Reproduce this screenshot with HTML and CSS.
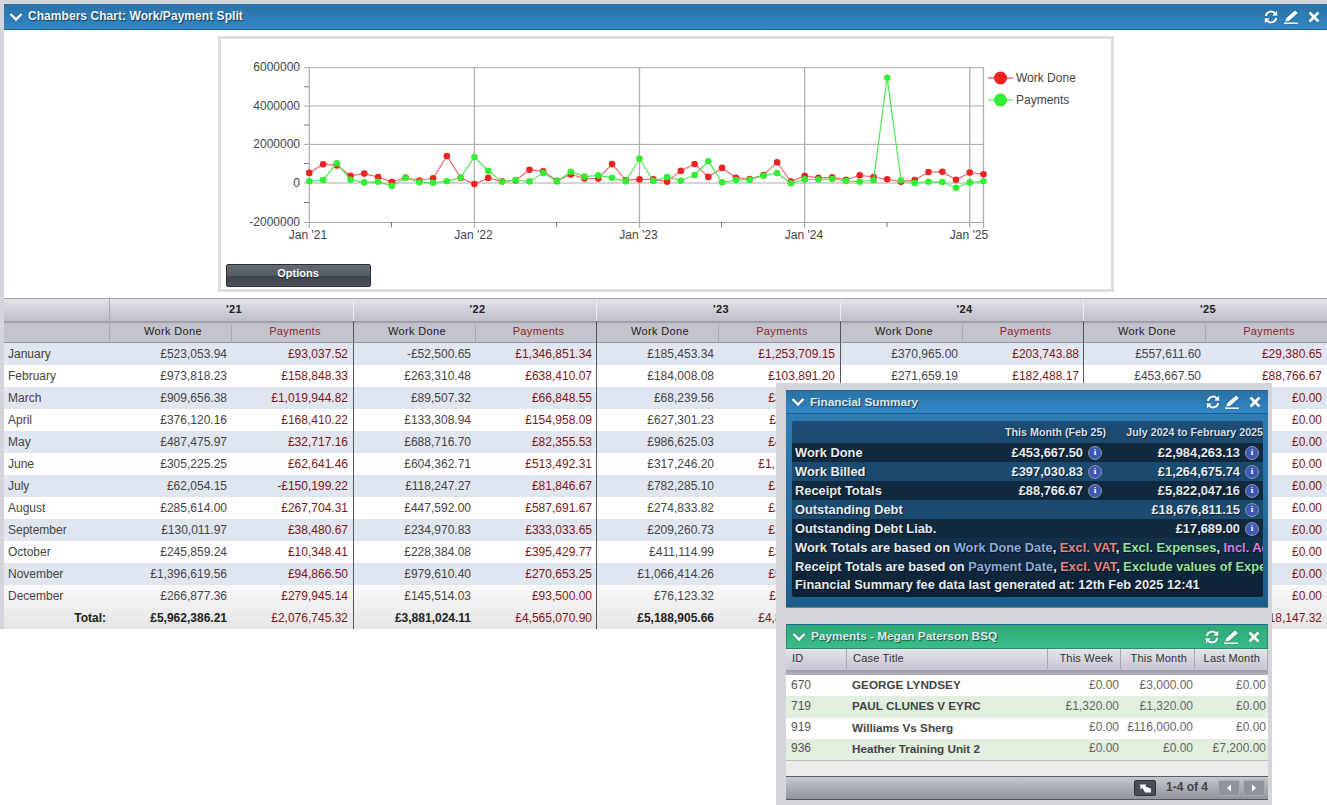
FILE: index.html
```html
<!DOCTYPE html>
<html lang="en">
<head>
<meta charset="utf-8">
<title>Chambers Chart</title>
<link rel="stylesheet" href="styles.css">
</head>
<body>
<svg class="sprite" aria-hidden="true">
  <symbol id="i-chevron" viewBox="0 0 14 14"><path d="M1.5 4 7 9.5 12.5 4" fill="none" stroke="currentColor" stroke-width="2.4"/></symbol>
  <symbol id="i-refresh" viewBox="0 0 14 14"><path d="M1.8 6A5.3 5.3 0 0 1 10.8 3.2M12.2 8A5.3 5.3 0 0 1 3.2 10.8" fill="none" stroke="currentColor" stroke-width="2"/><path d="M8.2 5.6 13.4 5.8 13 0.8ZM5.8 8.4 0.6 8.2 1 13.2Z" fill="currentColor"/></symbol>
  <symbol id="i-pencil" viewBox="0 0 14 14"><path d="M11 0.6 13.8 3 5.2 10.8 1.2 11.4 2.4 8Z" fill="currentColor"/><path d="M0 13.2h14" stroke="currentColor" stroke-width="1.5"/></symbol>
  <symbol id="i-close" viewBox="0 0 14 14"><path d="M2.5 2.5 11.5 11.5M11.5 2.5 2.5 11.5" fill="none" stroke="currentColor" stroke-width="2.8"/></symbol>
</svg>

<main class="widget">
  <section class="panel">
    <header class="bar bar-blue">
      <svg class="ic chev"><use href="#i-chevron"/></svg>
      <h1 class="bar-title">Chambers Chart: Work/Payment Split</h1>
      <svg class="ic"><use href="#i-refresh"/></svg>
      <svg class="ic ic-pencil"><use href="#i-pencil"/></svg>
      <svg class="ic ic-close"><use href="#i-close"/></svg>
    </header>

    <div class="chart-area">
      <div class="chart-box">
        <svg class="chart" viewBox="221 39 890 222" width="890" height="222">
          <defs>
            <marker id="dot-red" viewBox="0 0 8 8" refX="4" refY="4" markerUnits="userSpaceOnUse" markerWidth="8" markerHeight="8"><circle cx="4" cy="4" r="3.3" fill="#ee2222"/></marker>
            <marker id="dot-green" viewBox="0 0 8 8" refX="4" refY="4" markerUnits="userSpaceOnUse" markerWidth="8" markerHeight="8"><circle cx="4" cy="4" r="3.3" fill="#33ee33"/></marker>
          </defs>
          <g class="grid-h">
            <path d="M304 67.7H983.5M304 106H983.5M304 144.4H983.5M304 183H983.5M304 222.5H983.5"/>
          </g>
          <g class="tick">
            <path d="M304 86.8h5M304 125h5M304 163.5h5M304 202.5h5M391.5 222v5M556.5 222v5M721.5 222v5M887 222v5"/>
          </g>
          <g class="grid-v">
            <path d="M309.3 67V228M474.4 67V228M639.5 67V228M804.7 67V228M969.8 67V228M983.5 67V228"/>
          </g>
          <g class="axis-y">
            <text x="300" y="70.5">6000000</text>
            <text x="300" y="109.5">4000000</text>
            <text x="300" y="147.5">2000000</text>
            <text x="300" y="186.5">0</text>
            <text x="300" y="225.5">-2000000</text>
          </g>
          <g class="axis-x">
            <text x="308" y="239">Jan '21</text>
            <text x="473.5" y="239">Jan '22</text>
            <text x="638.5" y="239">Jan '23</text>
            <text x="804" y="239">Jan '24</text>
            <text x="969" y="239">Jan '25</text>
          </g>
          <polyline class="line-red" points="309.3,172.9 323.1,164.2 336.8,165.4 350.6,175.7 364.3,173.6 378.1,177.1 391.9,181.8 405.6,177.5 419.4,180.5 433.1,178.3 446.9,156 460.7,177.9 474.4,184 488.2,177.9 502,181.3 515.7,180.4 529.5,169.7 543.2,171.3 557,180.7 570.8,174.4 584.5,178.5 598.3,178.6 612,164.1 625.8,180.2 639.5,179.4 653.3,179.4 667.1,181.7 680.8,170.9 694.6,164 708.3,176.9 722.1,167.9 735.9,177.7 749.6,179 763.4,175 777.1,162.4 790.9,181.5 804.7,175.9 818.4,177.8 832.2,177.3 846,179.7 859.7,175.3 873.5,177 887.2,179.3 901,181.7 914.7,180 928.5,172 942.3,171.7 956,179.7 969.8,172.5 983.5,174.3"/>
          <polyline class="line-green" points="309.3,181.2 323.1,180 336.8,163.3 350.6,179.8 364.3,182.4 378.1,181.8 391.9,185.9 405.6,177.8 419.4,182.3 433.1,182.8 446.9,181.2 460.7,177.6 474.4,157 488.2,170.7 502,181.7 515.7,180 529.5,181.4 543.2,173.1 557,181.4 570.8,171.7 584.5,176.6 598.3,175.4 612,177.8 625.8,181.2 639.5,158.8 653.3,181 667.1,177 680.8,180.7 694.6,175 708.3,161.3 722.1,182.3 735.9,180 749.6,179.7 763.4,175.7 777.1,173 790.9,183.3 804.7,179.4 818.4,179.5 832.2,179 846,181 859.7,181.7 873.5,180.3 887.2,77.7 901,180.3 914.7,183 928.5,181.7 942.3,182 956,187.7 969.8,182.4 983.5,181.3"/>
          <path class="legend-red" d="M988 78h25"/>
          <circle class="legend-dot-red" cx="1000.5" cy="78" r="6.5"/>
          <text class="legend-text" x="1016" y="82">Work Done</text>
          <path class="legend-green" d="M988 100h25"/>
          <circle class="legend-dot-green" cx="1000.5" cy="100" r="6.5"/>
          <text class="legend-text" x="1016" y="104">Payments</text>
        </svg>
        <button class="options" type="button">Options</button>
      </div>
    </div>

    <table class="split">
      <colgroup>
        <col class="c-month"><col class="c-122"><col class="c-122"><col class="c-122"><col class="c-121"><col class="c-122"><col class="c-122"><col class="c-122"><col class="c-121"><col class="c-122"><col class="c-122">
      </colgroup>
      <thead>
        <tr class="head-years">
          <th></th><th colspan="2">'21</th><th colspan="2">'22</th><th colspan="2">'23</th><th colspan="2">'24</th><th colspan="2">'25</th>
        </tr>
        <tr class="head-cols">
          <th></th>
          <th>Work Done</th><th class="pay">Payments</th>
          <th>Work Done</th><th class="pay">Payments</th>
          <th>Work Done</th><th class="pay">Payments</th>
          <th>Work Done</th><th class="pay">Payments</th>
          <th>Work Done</th><th class="pay">Payments</th>
        </tr>
      </thead>
      <tbody>
        <tr><td class="m">January</td><td>£523,053.94</td><td class="pay">£93,037.52</td><td>-£52,500.65</td><td class="pay">£1,346,851.34</td><td>£185,453.34</td><td class="pay">£1,253,709.15</td><td>£370,965.00</td><td class="pay">£203,743.88</td><td>£557,611.60</td><td class="pay">£29,380.65</td></tr>
        <tr><td class="m">February</td><td>£973,818.23</td><td class="pay">£158,848.33</td><td>£263,310.48</td><td class="pay">£638,410.07</td><td>£184,008.08</td><td class="pay">£103,891.20</td><td>£271,659.19</td><td class="pay">£182,488.17</td><td>£453,667.50</td><td class="pay">£88,766.67</td></tr>
        <tr><td class="m">March</td><td>£909,656.38</td><td class="pay">£1,019,944.82</td><td>£89,507.32</td><td class="pay">£66,848.55</td><td>£68,239.56</td><td class="pay">£310,482.60</td><td></td><td class="pay"></td><td></td><td class="pay">£0.00</td></tr>
        <tr><td class="m">April</td><td>£376,120.16</td><td class="pay">£168,410.22</td><td>£133,308.94</td><td class="pay">£154,958.09</td><td>£627,301.23</td><td class="pay">£118,240.71</td><td></td><td class="pay"></td><td></td><td class="pay">£0.00</td></tr>
        <tr><td class="m">May</td><td>£487,475.97</td><td class="pay">£32,717.16</td><td>£688,716.70</td><td class="pay">£82,355.53</td><td>£986,625.03</td><td class="pay">£412,775.09</td><td></td><td class="pay"></td><td></td><td class="pay">£0.00</td></tr>
        <tr><td class="m">June</td><td>£305,225.25</td><td class="pay">£62,641.46</td><td>£604,362.71</td><td class="pay">£513,492.31</td><td>£317,246.20</td><td class="pay">£1,121,604.52</td><td></td><td class="pay"></td><td></td><td class="pay">£0.00</td></tr>
        <tr><td class="m">July</td><td>£62,054.15</td><td class="pay">-£150,199.22</td><td>£118,247.27</td><td class="pay">£81,846.67</td><td>£782,285.10</td><td class="pay">£152,318.44</td><td></td><td class="pay"></td><td></td><td class="pay">£0.00</td></tr>
        <tr><td class="m">August</td><td>£285,614.00</td><td class="pay">£267,704.31</td><td>£447,592.00</td><td class="pay">£587,691.67</td><td>£274,833.82</td><td class="pay">£155,907.36</td><td></td><td class="pay"></td><td></td><td class="pay">£0.00</td></tr>
        <tr><td class="m">September</td><td>£130,011.97</td><td class="pay">£38,480.67</td><td>£234,970.83</td><td class="pay">£333,033.65</td><td>£209,260.73</td><td class="pay">£170,212.83</td><td></td><td class="pay"></td><td></td><td class="pay">£0.00</td></tr>
        <tr><td class="m">October</td><td>£245,859.24</td><td class="pay">£10,348.41</td><td>£228,384.08</td><td class="pay">£395,429.77</td><td>£411,114.99</td><td class="pay">£381,605.19</td><td></td><td class="pay"></td><td></td><td class="pay">£0.00</td></tr>
        <tr><td class="m">November</td><td>£1,396,619.56</td><td class="pay">£94,866.50</td><td>£979,610.40</td><td class="pay">£270,653.25</td><td>£1,066,414.26</td><td class="pay">£518,340.77</td><td></td><td class="pay"></td><td></td><td class="pay">£0.00</td></tr>
        <tr class="row-dec"><td class="m">December</td><td>£266,877.36</td><td class="pay">£279,945.14</td><td>£145,514.03</td><td class="pay">£93,500.00</td><td>£76,123.32</td><td class="pay">£112,850.00</td><td></td><td class="pay"></td><td></td><td class="pay">£0.00</td></tr>
        <tr class="row-total"><td class="t">Total:</td><td>£5,962,386.21</td><td class="pay">£2,076,745.32</td><td>£3,881,024.11</td><td class="pay">£4,565,070.90</td><td>£5,188,905.66</td><td class="pay">£4,801,447.86</td><td></td><td class="pay"></td><td></td><td class="pay">£118,147.32</td></tr>
      </tbody>
    </table>
  </section>
</main>

<aside class="overlay">
  <section class="win">
    <header class="bar bar-blue bar-win">
      <svg class="ic chev"><use href="#i-chevron"/></svg>
      <h2 class="bar-title">Financial Summary</h2>
      <svg class="ic"><use href="#i-refresh"/></svg>
      <svg class="ic ic-pencil"><use href="#i-pencil"/></svg>
      <svg class="ic ic-close"><use href="#i-close"/></svg>
    </header>
    <div class="fin-body">
      <div class="fin">
        <div class="fin-head">
          <span class="fh1">This Month (Feb 25)</span>
          <span class="fh2">July 2024 to February 2025</span>
        </div>
        <div class="fin-row dark"><span class="lab">Work Done</span><span class="val">£453,667.50</span><span class="info">i</span><span class="val">£2,984,263.13</span><span class="info">i</span></div>
        <div class="fin-row lite"><span class="lab">Work Billed</span><span class="val">£397,030.83</span><span class="info">i</span><span class="val">£1,264,675.74</span><span class="info">i</span></div>
        <div class="fin-row dark"><span class="lab">Receipt Totals</span><span class="val">£88,766.67</span><span class="info">i</span><span class="val">£5,822,047.16</span><span class="info">i</span></div>
        <div class="fin-row lite"><span class="lab">Outstanding Debt</span><span class="val"></span><span></span><span class="val">£18,676,811.15</span><span class="info">i</span></div>
        <div class="fin-row dark"><span class="lab">Outstanding Debt Liab.</span><span class="val"></span><span></span><span class="val">£17,689.00</span><span class="info">i</span></div>
        <p class="fin-line">Work Totals are based on <span class="c-blue">Work Done Date</span>, <span class="c-red">Excl. VAT</span>, <span class="c-green">Excl. Expenses</span>, <span class="c-pink">Incl. Adjustments</span></p>
        <p class="fin-line">Receipt Totals are based on <span class="c-blue">Payment Date</span>, <span class="c-red">Excl. VAT</span>, <span class="c-green">Exclude values of Expenses</span></p>
        <p class="fin-line">Financial Summary fee data last generated at: 12th Feb 2025 12:41</p>
      </div>
    </div>
  </section>

  <section class="win win-pay">
    <header class="bar bar-green bar-win">
      <svg class="ic chev"><use href="#i-chevron"/></svg>
      <h2 class="bar-title">Payments - Megan Paterson BSQ</h2>
      <svg class="ic"><use href="#i-refresh"/></svg>
      <svg class="ic ic-pencil"><use href="#i-pencil"/></svg>
      <svg class="ic ic-close"><use href="#i-close"/></svg>
    </header>
    <table class="pay-table">
      <colgroup><col class="p-id"><col class="p-case"><col class="p-n"><col class="p-n2"><col class="p-n"></colgroup>
      <thead>
        <tr><th class="l">ID</th><th class="l">Case Title</th><th>This Week</th><th>This Month</th><th>Last Month</th></tr>
      </thead>
      <tbody>
        <tr><td>670</td><td class="case">GEORGE LYNDSEY</td><td class="n">£0.00</td><td class="n">£3,000.00</td><td class="n">£0.00</td></tr>
        <tr class="alt"><td>719</td><td class="case">PAUL CLUNES V EYRC</td><td class="n">£1,320.00</td><td class="n">£1,320.00</td><td class="n">£0.00</td></tr>
        <tr><td>919</td><td class="case">Williams Vs Sherg</td><td class="n">£0.00</td><td class="n">£116,000.00</td><td class="n">£0.00</td></tr>
        <tr class="alt"><td>936</td><td class="case">Heather Training Unit 2</td><td class="n">£0.00</td><td class="n">£0.00</td><td class="n">£7,200.00</td></tr>
      </tbody>
    </table>
    <div class="pay-strip"></div>
    <footer class="pay-foot">
      <span class="tool-btn"><svg class="tool-ic" viewBox="0 0 14 10"><path d="M1 0.5H8L6.6 2.6 13 5.2V9.5H6.5L3.6 4.2 1.5 6Z" fill="#fff"/></svg></span>
      <span class="pager">1-4 of 4</span>
      <span class="nav-btn"><svg class="nav-ic" viewBox="0 0 6 8"><path d="M5 0.5V7.5L1 4Z" fill="#fff"/></svg></span>
      <span class="nav-btn"><svg class="nav-ic" viewBox="0 0 6 8"><path d="M1 0.5V7.5L5 4Z" fill="#fff"/></svg></span>
    </footer>
  </section>
</aside>
</body>
</html>
```

FILE: styles.css
```css
* { box-sizing: border-box; }
html, body { margin: 0; padding: 0; height: 805px; overflow: hidden; background: #fff; }
body { font-family: "Liberation Sans", Arial, sans-serif; font-size: 12px; color: #444; position: relative; }
.sprite { display: none; }

.widget { background: #d3d5da; padding: 4px 0 0 4px; height: 629px; overflow: hidden; }
.panel { background: #fff; width: 1323px; }

.bar { display: flex; align-items: center; height: 26px; padding: 0 5px 0 5px; color: #fff; }
.bar-blue { background: linear-gradient(#2a72a6, #3187c6); border-bottom: 1px solid #1c5c88; }
.bar-green { background: linear-gradient(#30a877, #39bd86); border: 1px solid #25906a; border-bottom-color: #25906a; }
.bar-title { flex: 1; margin: 0 0 1px 5px; font-size: 12px; letter-spacing: .05px; font-weight: bold; color: #eef3f7; text-shadow: 1px 1px 1px rgba(0, 0, 0, .55); white-space: nowrap; }
.ic { width: 14px; height: 14px; color: #fff; flex: none; filter: drop-shadow(0 0 1px rgba(0, 0, 0, .25)); }
.ic-pencil { margin-left: 6px; }
.ic-close { margin-left: 9px; margin-right: 1px; }
.bar-win .ic-pencil { margin-left: 5px; }
.bar-win .bar-title { font-size: 11.8px; letter-spacing: 0; margin-left: 5px; color: #dfe8f0; }

.chart-area { padding: 6px 0 6px; }
.chart-box { width: 896px; height: 256px; margin: 0 auto; border: 3px solid #dedede; background: #fff; }
.chart { display: block; font-size: 12px; fill: #444; }
.grid-h path { stroke: #a9a9a9; stroke-width: 1; fill: none; }
.tick path { stroke: #777; stroke-width: 1; fill: none; }
.grid-v path { stroke: #b0b0b0; stroke-width: 1.3; fill: none; }
.axis-y text { text-anchor: end; }
.axis-x text { text-anchor: middle; }
.line-red, .line-green { fill: none; stroke-width: 1.2; }
.line-red { stroke: #f06a6a; marker-start: url(#dot-red); marker-mid: url(#dot-red); marker-end: url(#dot-red); }
.line-green { stroke: #4fe84f; marker-start: url(#dot-green); marker-mid: url(#dot-green); marker-end: url(#dot-green); }
.legend-red { stroke: #ee2222; stroke-width: 1; }
.legend-green { stroke: #33ee33; stroke-width: 1; }
.legend-dot-red { fill: #ee2222; }
.legend-dot-green { fill: #33ee33; }
.legend-text { fill: #444; }

.options { display: block; width: 145px; height: 23px; margin: 3px 0 0 5px; padding: 0 0 5px; border: 1px solid #2a2e33; border-radius: 2px; background: linear-gradient(#656c73 0, #555c63 50%, #3e454c 52%, #4b5158 100%); color: #fff; font: bold 11px "Liberation Sans", Arial, sans-serif; text-shadow: 0 1px 1px rgba(0, 0, 0, .5); }

.split { border-collapse: separate; border-spacing: 0; table-layout: fixed; width: 1324px; }
.c-month { width: 106px; }
.c-122 { width: 122px; }
.c-121 { width: 121px; }
.split th { font-size: 11px; font-weight: normal; color: #222; letter-spacing: .35px; padding: 0 0 0 5px; text-align: center; }
.head-years th { height: 23px; padding-bottom: 3px; background: linear-gradient(#e2e2e8, #bfbfca); border-top: 1px solid #a5a5b6; border-right: 1px solid #ececf0; font-weight: bold; }
.head-cols th { height: 22px; padding-bottom: 2px; background: linear-gradient(#8f8f9f 0, #c2c2cd 3px, #c6c6d1 100%); border-bottom: 1px solid #9494a6; border-right: 1px solid #a9a9b9; }
.head-years th:first-child { border-right: 1px solid #a9a9b9; }
.split .head-cols th.pay { color: #8a2a2a; border-right: 1px solid #55555f; }
.split td { height: 22px; padding: 0 5px 0 0; text-align: right; white-space: nowrap; overflow: hidden; color: #444; }
.split tbody tr:nth-child(odd) { background: #e0e6f0; }
.split td.m { text-align: left; padding: 0 0 0 4px; }
.split td.t { font-weight: bold; padding-right: 4px; }
.split td.pay { color: #7f1515; border-right: 1px solid #55555f; }
.split td:nth-child(5), .split td:nth-child(9) { padding-right: 4px; }
.split tbody tr.row-dec { background: linear-gradient(#f8f8f8, #efefef); }
.split tbody tr.row-total { background: linear-gradient(#efefef, #e5e5e5); }
.row-total td { font-weight: bold; color: #222; }
.split .row-total td.pay { font-weight: normal; }

.overlay { position: absolute; left: 776px; top: 383px; width: 496px; height: 422px; background: #d3d5da; padding: 7px 4px 0 10px; }
.win { width: 482px; }
.bar-win { height: 24px; padding-right: 5px; border-top: 1px solid #1f6595; }
.fin-body { height: 194px; padding: 7px 5px 0 6px; background: linear-gradient(#2e7cb5, #1d5d8a); border-bottom: 1px solid #6f8393; }
.fin { height: 176px; background: linear-gradient(#1d4e77, #0c2133); border-radius: 2px; overflow: hidden; color: #e6ecf2; text-shadow: 1px 1px 1px rgba(0, 0, 0, .6); font-weight: bold; font-size: 12.85px; }
.fin-head { height: 22px; display: grid; grid-template-columns: 314px 157px; align-items: center; font-size: 10.7px; color: #d6dfe8; text-align: right; }
.fin-row { display: grid; grid-template-columns: 151px 137px 23px 134px 23px; height: 19px; padding-left: 3px; align-items: center; }
.fin-row.dark { background: #11293f; }
.fin-row.lite { background: #1b4a70; }
.val { text-align: right; }
.info { width: 14px; height: 14px; margin-left: 5px; border-radius: 50%; border: 1.5px solid #8d97ad; background: #3e58b4; color: #fff; font: bold 9px/11px "Liberation Serif", serif; text-align: center; text-shadow: none; }
.fin-line { margin: 0; height: 18.7px; line-height: 18.7px; padding-left: 3px; white-space: nowrap; overflow: hidden; }
.fin-row + .fin-line { margin-top: 1px; }
.c-blue { color: #8aa9d8; }
.c-red { color: #e8837c; }
.c-green { color: #97e09a; }
.c-pink { color: #df7ee0; }

.win-pay { margin-top: 16px; }
.win-pay .bar-win { height: 25px; }
.pay-table { border-collapse: separate; border-spacing: 0; table-layout: fixed; width: 482px; background: #fff; }
.p-id { width: 61px; }
.p-case { width: 201px; }
.p-n { width: 73px; }
.p-n2 { width: 74px; }
.pay-table th { height: 26px; padding: 0 7px 8px 0; font-size: 11px; font-weight: normal; letter-spacing: .2px; color: #333; text-align: right; background: linear-gradient(#e4e4ea 0, #c6c6d2 21px, #9a9aac 21px, #b4b4c2 26px); border-right: 1px solid #a9a9b9; }
.pay-table th.l { text-align: left; padding-left: 6px; }
.pay-table td { height: 21.25px; padding: 0 2px 2px 5px; color: #555; white-space: nowrap; overflow: hidden; }
.pay-table td.case { font-weight: bold; font-size: 11.7px; color: #444; }
.pay-table td.n { text-align: right; color: #666; padding-left: 0; }
.pay-table tr.alt td { background: #e2efdf; }
.pay-strip { height: 16px; background: #ebebeb; border-top: 1px solid #b9bcc2; }
.pay-foot { height: 24px; display: flex; align-items: center; justify-content: flex-end; padding: 0 3px 0 0; background: linear-gradient(#c4c8ce, #8f959d); border-top: 1px solid #5c6066; border-bottom: 1px solid #55595f; }
.tool-btn { width: 22px; height: 16px; display: flex; align-items: center; justify-content: center; background: #474e56; border: 1px solid #2d3238; border-radius: 2px; }
.tool-ic { width: 13px; height: 9px; }
.pager { width: 62px; padding-bottom: 2px; text-align: center; font-size: 12px; font-weight: bold; color: #444; }
.nav-btn { width: 22px; height: 16px; display: flex; align-items: center; justify-content: center; background: #8e949c; border: 1px solid #a8adb4; border-radius: 2px; }
.nav-btn + .nav-btn { margin-left: 3px; }
.nav-ic { width: 6px; height: 8px; }
```
